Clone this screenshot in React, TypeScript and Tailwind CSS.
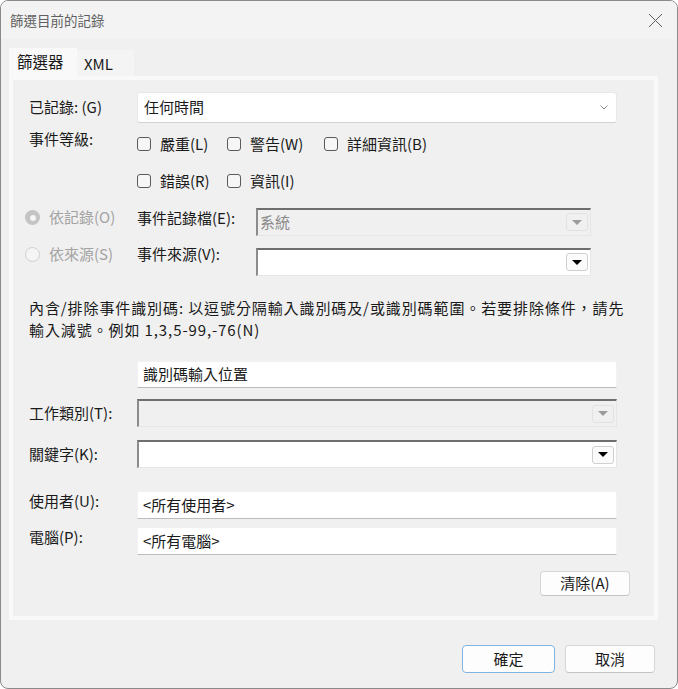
import React from 'react';

const font = "font-['Noto_Sans_CJK_TC','Noto_Sans',sans-serif]";

function Arrow({ disabled }: { disabled?: boolean }) {
  return (
    <div className={`ml-auto mr-[2px] w-[22px] h-[18px] rounded-[3px] border flex items-center justify-center ${disabled ? 'border-[#e2e2e2] bg-[#f0f0f0]' : 'border-[#cfcfcf] bg-[#fbfbfb]'}`}>
      <div className={`w-0 h-0 border-l-[5px] border-r-[5px] border-t-[5px] border-l-transparent border-r-transparent ${disabled ? 'border-t-[#9c9c9c]' : 'border-t-black'}`} />
    </div>
  );
}

function Sunken({ width, disabled, text, h }: { width: string; disabled?: boolean; text?: string; h: string }) {
  return (
    <div className={`${width} ${h} flex items-center border-t-2 border-l-2 border-t-[#6e6e6e] border-l-[#8c8c8c] border-r border-b border-r-[#e6e6e6] border-b-[#e6e6e6] ${disabled ? 'bg-[#f0f0f0]' : 'bg-white'}`}>
      {text && <span className="pl-[2px] text-[15px] text-[#8a8a8a]">{text}</span>}
      <Arrow disabled={disabled} />
    </div>
  );
}

function Flat({ text }: { text: string }) {
  return (
    <div className="w-[480px] h-[28px] flex items-center bg-white border border-[#f2f2f2] border-b-[#bcbcbc] pl-[5px] text-[15px] text-[#1a1a1a]">
      {text}
    </div>
  );
}

function Check({ label, w }: { label: string; w: string }) {
  return (
    <div className={`${w} flex items-center`}>
      <div className="w-[14px] h-[14px] rounded-[3px] border border-[#5a5a5a] bg-[#f6f6f6]" />
      <span className="ml-[9px] text-[15px]">{label}</span>
    </div>
  );
}

export default function App() {
  return (
    <div className={`w-[678px] h-[689px] bg-[#f0f0f0] border border-[#8a8a8a] rounded-[8px] overflow-hidden text-[#1a1a1a] ${font}`}>
      <div className="h-[38px] flex items-center pl-[9px] pr-[14px] bg-[#f3f3f3]">
        <span className="text-[13.5px] text-[#5f5f5f]">篩選目前的記錄</span>
        <svg className="ml-auto" width="15" height="15" viewBox="0 0 15 15">
          <path d="M1 1 L14 14 M14 1 L1 14" stroke="#5f5f5f" strokeWidth="1" fill="none" />
        </svg>
      </div>

      <div className="mt-[9px] ml-[8px] flex items-end">
        <div className="w-[68px] h-[28px] bg-[#f9f9f9] pl-[8px] text-[15.5px] leading-[26px]">篩選器</div>
        <div className="w-[57px] h-[26px] bg-[#f4f4f4] pl-[7px] text-[15px] leading-[28px]">XML</div>
      </div>

      <div className="ml-[8px] w-[649px] h-[544px] border-4 border-[#f9f9f9] bg-[#f0f0f0] pl-[16px] flex flex-col text-[15px]">
        <div className="mt-[12px] flex items-center h-[31px]">
          <div className="w-[108px]">已記錄: (G)</div>
          <div className="w-[480px] h-[31px] bg-white border border-[#e8e8e8] border-b-[#d2d2d2] rounded-[3px] flex items-center pl-[6px]">
            <span>任何時間</span>
            <svg className="ml-auto mr-[8px]" width="8" height="5" viewBox="0 0 8 5">
              <path d="M0.5 0.5 L4 4 L7.5 0.5" stroke="#8a8a8a" strokeWidth="1" fill="none" />
            </svg>
          </div>
        </div>

        <div className="mt-[9px] flex items-start h-[24px]">
          <div className="w-[108px] leading-[24px] -mt-[5px]">事件等級:</div>
          <div className="flex items-center h-[24px]">
            <Check label="嚴重(L)" w="w-[90px]" />
            <Check label="警告(W)" w="w-[97px]" />
            <Check label="詳細資訊(B)" w="w-[130px]" />
          </div>
        </div>

        <div className="mt-[13px] flex items-center h-[24px]">
          <div className="w-[108px]" />
          <Check label="錯誤(R)" w="w-[90px]" />
          <Check label="資訊(I)" w="w-[97px]" />
        </div>

        <div className="mt-[15px] -ml-[4px] flex items-center h-[27px]">
          <div className="w-[112px] flex items-center -mt-[8px]">
            <div className="w-[15px] h-[15px] rounded-full bg-[#c4c4c4] flex items-center justify-center">
              <div className="w-[6px] h-[6px] rounded-full bg-[#f5f5f5]" />
            </div>
            <span className="ml-[9px] text-[#a3a3a3]">依記錄(O)</span>
          </div>
          <div className="w-[119px] -mt-[6px]">事件記錄檔(E):</div>
          <Sunken width="w-[335px]" h="h-[28px]" disabled text="系統" />
        </div>

        <div className="mt-[13px] -ml-[4px] flex items-center h-[27px]">
          <div className="w-[112px] flex items-center -mt-[14px]">
            <div className="w-[15px] h-[15px] rounded-full border border-[#cfcfcf] bg-[#f5f5f5]" />
            <span className="ml-[9px] text-[#a3a3a3]">依來源(S)</span>
          </div>
          <div className="w-[119px] -mt-[14px]">事件來源(V):</div>
          <Sunken width="w-[335px]" h="h-[28px]" />
        </div>

        <div className="mt-[22px] leading-[22px] whitespace-nowrap text-[15px] tracking-[0.9px]">
          <div>內含/排除事件識別碼: 以逗號分隔輸入識別碼及/或識別碼範圍。若要排除條件，請先</div>
          <div>輸入減號。例如 1,3,5-99,-76(N)</div>
        </div>

        <div className="mt-[20px] ml-[108px]">
          <div className="w-[480px] h-[27px] flex items-center bg-white border border-[#f2f2f2] border-b-[#bcbcbc] pl-[5px]">識別碼輸入位置</div>
        </div>

        <div className="mt-[11px] flex items-center">
          <div className="w-[108px]">工作類別(T):</div>
          <Sunken width="w-[480px]" h="h-[28px]" disabled />
        </div>

        <div className="mt-[13px] flex items-center">
          <div className="w-[108px]">關鍵字(K):</div>
          <Sunken width="w-[480px]" h="h-[28px]" />
        </div>

        <div className="mt-[23px] flex items-start">
          <div className="w-[108px] leading-[19px]">使用者(U):</div>
          <Flat text="<所有使用者>" />
        </div>

        <div className="mt-[8px] flex items-start">
          <div className="w-[108px] leading-[19px]">電腦(P):</div>
          <Flat text="<所有電腦>" />
        </div>

        <div className="mt-[16px] self-end mr-[24px] w-[90px] h-[25px] rounded-[4px] bg-[#fdfdfd] border border-[#d6d6d6] border-b-[#c4c4c4] flex items-center justify-center text-[15px]">
          清除(A)
        </div>
      </div>

      <div className="mt-[25px] mr-[22px] flex justify-end gap-[10px]">
        <div className="w-[93px] h-[28px] rounded-[4px] bg-[#fdfdfd] border border-[#7fb4e0] flex items-center justify-center text-[15px]">確定</div>
        <div className="w-[90px] h-[28px] rounded-[4px] bg-[#fdfdfd] border border-[#d6d6d6] border-b-[#c4c4c4] flex items-center justify-center text-[15px]">取消</div>
      </div>
    </div>
  );
}
